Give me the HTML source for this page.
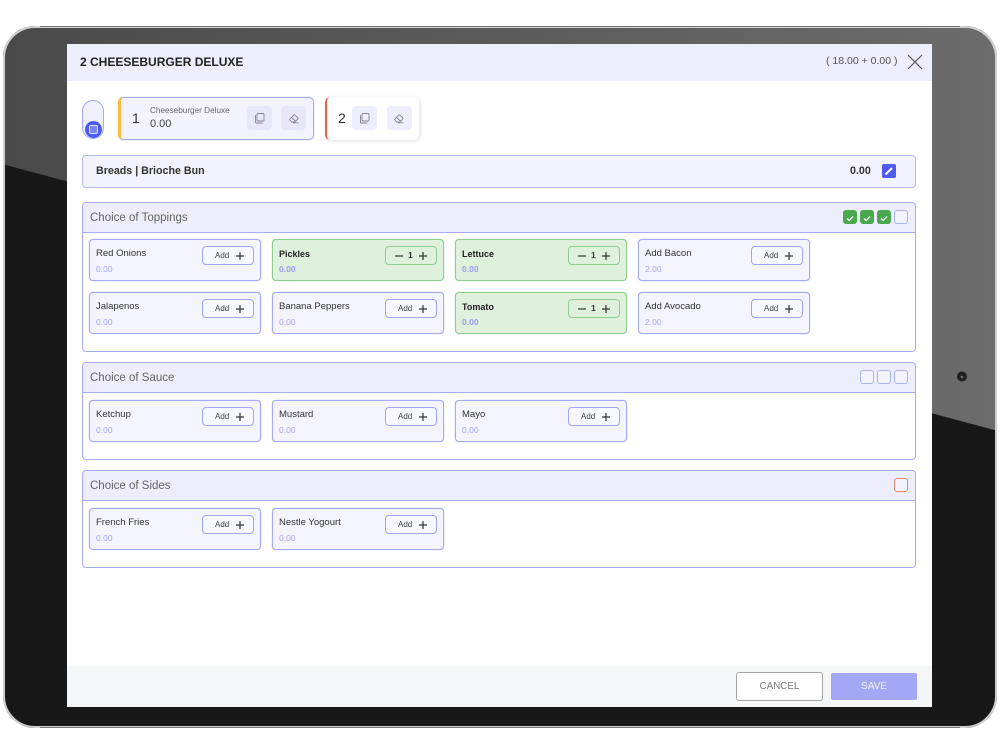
<!DOCTYPE html>
<html><head><meta charset="utf-8"><style>
html,body{margin:0;padding:0;background:#fff}
body{width:1000px;height:755px;position:relative;overflow:hidden;font-family:"Liberation Sans",sans-serif;color:#222}
.a{position:absolute;box-sizing:border-box}
.sec{position:absolute;left:82px;width:834px;box-sizing:border-box;border:1px solid #a6acf0;border-radius:4px;background:#fff}
.sh{position:absolute;left:0;top:0;right:0;background:#eceefb;border-bottom:1px solid #a6acf0;border-radius:3px 3px 0 0}
.st{position:absolute;left:7px;font-size:11.5px;color:#666;line-height:14px;top:8px}
.c{position:absolute;width:172px;height:42px;box-sizing:border-box;border:1px solid #a4aaf6;border-radius:4px;background:#f3f4fe;box-shadow:0 0 1px #a4aaf6}
.c b,.c span.n{position:absolute;left:6px;top:7px;font-size:9.5px;line-height:14px;font-weight:normal;color:#333}
.c b{font-weight:bold;color:#222;font-size:9px}
.c i{position:absolute;left:6px;top:24px;font-style:normal;font-size:8.5px;line-height:11px;color:#a1a6f2}
.g{background:#dff0dd;border-color:#8fce93;box-shadow:0 0 1px #8fce93}
.g i{font-weight:bold;color:#9a9ff2}
.btn{position:absolute;left:112px;top:6px;width:52px;height:19px;box-sizing:border-box;border:1px solid #a0a6f5;border-radius:4px;background:#f6f7ff;font-size:8px;line-height:17px;color:#444}
.g .btn{background:#dff0dd;border-color:#8fce93}
.btn u{position:absolute;left:12px;top:0;text-decoration:none}
.btn svg{position:absolute;left:33px;top:5px}
.g .btn u{left:22px;font-size:8.5px;font-weight:bold;color:#333}
.g .btn svg.m{left:9px}
.cb{position:absolute;top:7px;width:14px;height:14px;box-sizing:border-box;border:1px solid #aab3f5;border-radius:3px;background:#f1f3fe}
.ck{background:#4aa84f;border-color:#4aa84f}
.ib{position:absolute;width:25px;height:24px;border-radius:4px;background:#eceefc}
</style></head><body>
<svg class="a" style="left:0;top:0" width="1000" height="755">
<defs><linearGradient id="t" x1="0" x2="1" y1="0" y2="0"><stop offset="0" stop-color="#4a4a4a"/><stop offset="1" stop-color="#6c6c6c"/></linearGradient>
<clipPath id="d"><rect x="3" y="26" width="994" height="702" rx="32"/></clipPath></defs>
<rect x="3" y="26" width="994" height="702" rx="32" fill="#181818"/>
<polygon clip-path="url(#d)" points="0,163.5 1000,431.5 1000,0 0,0" fill="url(#t)"/>
<rect x="4" y="27" width="992" height="700" rx="31" fill="none" stroke="#cfcfcf" stroke-width="2"/>
<path d="M40 26.500 H960 M40 727.500 H960" stroke="#777" stroke-width="1"/>
<circle cx="962" cy="376.500" r="5" fill="#1e1e1e"/><circle cx="962" cy="377" r="1.500" fill="#666"/>
</svg>
<div class="a" style="left:67px;top:44px;width:865px;height:663px;background:#fff"></div>
<div class="a" style="left:67px;top:44px;width:865px;height:37px;background:#eceefb"></div>
<div class="a" style="left:80px;top:54px;font-size:12px;line-height:16px;font-weight:bold;color:#222;white-space:nowrap">2 CHEESEBURGER DELUXE</div>
<div class="a" style="left:826px;top:54px;font-size:10.500px;line-height:15px;color:#555;white-space:nowrap">( 18.00 + 0.00 )</div>
<svg class="a" style="left:907px;top:54px" width="16" height="16"><path d="M1 1 L15 15 M15 1 L1 15" stroke="#555" stroke-width="1.200" fill="none"/></svg>

<div class="a" style="left:82px;top:100px;width:22px;height:39px;border:1px solid #a4aaf6;border-radius:11px;background:#eef0fc"></div>
<div class="a" style="left:85px;top:121px;width:17px;height:17px;border-radius:50%;background:#4d5cf0"></div>
<div class="a" style="left:89px;top:125px;width:9px;height:9px;border:1.500px solid #dfe2ff;border-radius:2px;background:#7c87f5"></div>

<div class="a" style="left:118px;top:97px;width:196px;height:43px;border:1px solid #a4aaf6;border-left:3px solid #fbbf3c;border-radius:5px;background:#f2f3fd;box-shadow:0 0 1px #a4aaf6"></div>
<div class="a" style="left:132px;top:110px;font-size:14px;line-height:17px;color:#333">1</div>
<div class="a" style="left:150px;top:105px;font-size:8.2px;line-height:12px;color:#666;white-space:nowrap">Cheeseburger Deluxe</div>
<div class="a" style="left:150px;top:117px;font-size:11px;line-height:14px;color:#444">0.00</div>
<div class="ib" style="left:247px;top:106px;background:#e6e8f9"></div>
<div class="ib" style="left:281px;top:106px;background:#e6e8f9"></div>
<div class="a" style="left:325px;top:97px;width:94px;height:43px;border-left:2px solid #e8604c;border-radius:5px;background:#fff;box-shadow:1px 1px 4px rgba(0,0,0,.13)"></div>
<div class="a" style="left:338px;top:110px;font-size:14px;line-height:17px;color:#333">2</div>
<div class="ib" style="left:352px;top:106px"></div>
<div class="ib" style="left:387px;top:106px"></div>
<svg class="a" style="left:0;top:0" width="1000" height="160" fill="none" stroke="#85858f" stroke-width=".9">
<rect x="257" y="113.500" width="7" height="7.500" rx="1"/><path d="M255.500 115 v7 a1 1 0 0 0 1 1 h6"/>
<rect x="362" y="113.500" width="7" height="7.500" rx="1"/><path d="M360.500 115 v7 a1 1 0 0 0 1 1 h6"/>
<path d="M289.500 119.500 l4 -4.300 a1 1 0 0 1 1.400 0 l2.800 2.500 a1 1 0 0 1 0 1.400 l-2.900 2.900 h-3 z M291.500 117.500 l4 3.500 M293 122.800 h5.500"/>
<path d="M394.500 119.500 l4 -4.300 a1 1 0 0 1 1.400 0 l2.800 2.500 a1 1 0 0 1 0 1.400 l-2.900 2.900 h-3 z M396.500 117.500 l4 3.500 M398 122.800 h5.500"/>
</svg>

<div class="a" style="left:82px;top:155px;width:834px;height:33px;border:1px solid #b5baf3;border-radius:4px;background:#f2f3fe"></div>
<div class="a" style="left:96px;top:164px;font-size:10.700px;line-height:15px;font-weight:bold;color:#333;white-space:nowrap">Breads | Brioche Bun</div>
<div class="a" style="left:850px;top:164px;font-size:10.700px;line-height:15px;font-weight:bold;color:#333">0.00</div>
<div class="a" style="left:882px;top:164px;width:14px;height:14px;background:#4f5cf0;border-radius:2px"></div>
<svg class="a" style="left:882px;top:164px" width="14" height="14"><path d="M3.500 10.500 L10 4" stroke="#fff" stroke-width="2"/></svg>

<div class="sec" style="top:202px;height:150px">
 <div class="sh" style="height:29px"><div class="st">Choice of Toppings</div>
  <div class="cb ck" style="left:760px"><svg width="12" height="12"><path d="M3 6.500 L5.200 8.500 L9 4.500" stroke="#fff" stroke-width="1.200" fill="none"/></svg></div>
  <div class="cb ck" style="left:777px"><svg width="12" height="12"><path d="M3 6.500 L5.200 8.500 L9 4.500" stroke="#fff" stroke-width="1.200" fill="none"/></svg></div>
  <div class="cb ck" style="left:794px"><svg width="12" height="12"><path d="M3 6.500 L5.200 8.500 L9 4.500" stroke="#fff" stroke-width="1.200" fill="none"/></svg></div>
  <div class="cb" style="left:811px"></div>
 </div>
 <div class="c" style="left:6px;top:36px"><span class="n">Red Onions</span><i>0.00</i><div class="btn"><u>Add</u><svg width="8" height="8"><path d="M4 0V8M0 4H8" stroke="#333" stroke-width="1.200"/></svg></div></div>
 <div class="c g" style="left:189px;top:36px"><b>Pickles</b><i>0.00</i><div class="btn"><svg class="m" width="8" height="8"><path d="M0 4H8" stroke="#333" stroke-width="1.200"/></svg><u>1</u><svg width="8" height="8"><path d="M4 0V8M0 4H8" stroke="#333" stroke-width="1.200"/></svg></div></div>
 <div class="c g" style="left:372px;top:36px"><b>Lettuce</b><i>0.00</i><div class="btn"><svg class="m" width="8" height="8"><path d="M0 4H8" stroke="#333" stroke-width="1.200"/></svg><u>1</u><svg width="8" height="8"><path d="M4 0V8M0 4H8" stroke="#333" stroke-width="1.200"/></svg></div></div>
 <div class="c" style="left:555px;top:36px"><span class="n">Add Bacon</span><i>2.00</i><div class="btn"><u>Add</u><svg width="8" height="8"><path d="M4 0V8M0 4H8" stroke="#333" stroke-width="1.200"/></svg></div></div>
 <div class="c" style="left:6px;top:89px"><span class="n">Jalapenos</span><i>0.00</i><div class="btn"><u>Add</u><svg width="8" height="8"><path d="M4 0V8M0 4H8" stroke="#333" stroke-width="1.200"/></svg></div></div>
 <div class="c" style="left:189px;top:89px"><span class="n">Banana Peppers</span><i>0.00</i><div class="btn"><u>Add</u><svg width="8" height="8"><path d="M4 0V8M0 4H8" stroke="#333" stroke-width="1.200"/></svg></div></div>
 <div class="c g" style="left:372px;top:89px"><b>Tomato</b><i>0.00</i><div class="btn"><svg class="m" width="8" height="8"><path d="M0 4H8" stroke="#333" stroke-width="1.200"/></svg><u>1</u><svg width="8" height="8"><path d="M4 0V8M0 4H8" stroke="#333" stroke-width="1.200"/></svg></div></div>
 <div class="c" style="left:555px;top:89px"><span class="n">Add Avocado</span><i>2.00</i><div class="btn"><u>Add</u><svg width="8" height="8"><path d="M4 0V8M0 4H8" stroke="#333" stroke-width="1.200"/></svg></div></div>
</div>

<div class="sec" style="top:362px;height:98px">
 <div class="sh" style="height:29px"><div class="st">Choice of Sauce</div>
  <div class="cb" style="left:777px"></div><div class="cb" style="left:794px"></div><div class="cb" style="left:811px"></div>
 </div>
 <div class="c" style="left:6px;top:37px"><span class="n">Ketchup</span><i>0.00</i><div class="btn"><u>Add</u><svg width="8" height="8"><path d="M4 0V8M0 4H8" stroke="#333" stroke-width="1.200"/></svg></div></div>
 <div class="c" style="left:189px;top:37px"><span class="n">Mustard</span><i>0.00</i><div class="btn"><u>Add</u><svg width="8" height="8"><path d="M4 0V8M0 4H8" stroke="#333" stroke-width="1.200"/></svg></div></div>
 <div class="c" style="left:372px;top:37px"><span class="n">Mayo</span><i>0.00</i><div class="btn"><u>Add</u><svg width="8" height="8"><path d="M4 0V8M0 4H8" stroke="#333" stroke-width="1.200"/></svg></div></div>
</div>

<div class="sec" style="top:470px;height:98px">
 <div class="sh" style="height:29px"><div class="st">Choice of Sides</div>
  <div class="cb" style="left:811px;border-color:#e58a70"></div>
 </div>
 <div class="c" style="left:6px;top:37px"><span class="n">French Fries</span><i>0.00</i><div class="btn"><u>Add</u><svg width="8" height="8"><path d="M4 0V8M0 4H8" stroke="#333" stroke-width="1.200"/></svg></div></div>
 <div class="c" style="left:189px;top:37px"><span class="n">Nestle Yogourt</span><i>0.00</i><div class="btn"><u>Add</u><svg width="8" height="8"><path d="M4 0V8M0 4H8" stroke="#333" stroke-width="1.200"/></svg></div></div>
</div>

<div class="a" style="left:67px;top:666px;width:865px;height:41px;background:#f5f6f8"></div>
<div class="a" style="left:736px;top:672px;width:87px;height:29px;border:1px solid #a5a5a5;border-radius:3px;background:#fff;font-size:9.800px;line-height:28px;text-align:center;color:#777">CANCEL</div>
<div class="a" style="left:831px;top:673px;width:86px;height:27px;border-radius:2px;background:#a3a8f6;font-size:10px;line-height:27px;text-align:center;color:#f2f3ff">SAVE</div>
</body></html>
